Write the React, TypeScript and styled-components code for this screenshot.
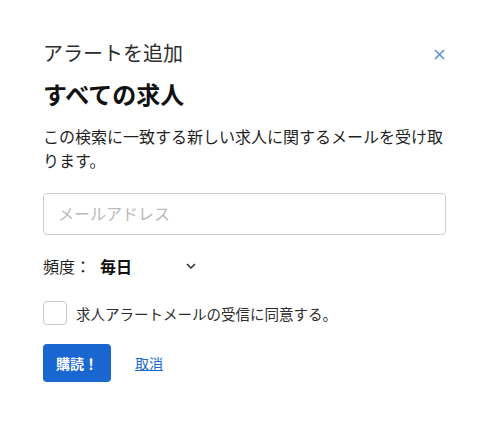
import styled, { createGlobalStyle } from "styled-components";

const GlobalStyle = createGlobalStyle`
    body {
        margin: 0;
        background: #ffffff;
        font-family: "Noto Sans", "Noto Sans CJK JP", sans-serif;
        color: #1f1f1f;
    }
`;

const Dialog = styled.div`
    width: 489px;
    box-sizing: border-box;
    padding: 40px 43px 40px 43px;
`;

const TopRow = styled.div`
    display: flex;
    align-items: center;
    justify-content: space-between;
    height: 28px;
`;

const Title = styled.h2`
    margin: 0;
    font-size: 20px;
    font-weight: 400;
    line-height: 28px;
    color: #2d2d2d;
`;

const CloseButton = styled.button`
    border: none;
    background: none;
    padding: 0;
    width: 14px;
    height: 14px;
    display: flex;
    align-items: center;
    justify-content: center;
    cursor: pointer;
`;

const Heading = styled.h1`
    margin: 11px 0 0 0;
    font-size: 24px;
    font-weight: 700;
    line-height: 32px;
    color: #111111;
`;

const Description = styled.p`
    margin: 14px 0 0 0;
    font-size: 16px;
    line-height: 24px;
    color: #1f1f1f;
`;

const EmailInput = styled.input`
    display: block;
    margin-top: 20px;
    width: 100%;
    height: 42px;
    box-sizing: border-box;
    border: 1px solid #cccccc;
    border-radius: 4px;
    padding: 0 14px;
    font-family: inherit;
    font-size: 16px;
    &::placeholder {
        color: #b9b9b9;
    }
`;

const FrequencyRow = styled.div`
    display: flex;
    align-items: center;
    margin-top: 19px;
    height: 24px;
    font-size: 16px;
`;

const Label = styled.span`
    color: #1f1f1f;
    width: 57px;
`;

const Select = styled.div`
    display: flex;
    align-items: center;
    justify-content: space-between;
    width: 96px;
    font-weight: 700;
    color: #111111;
`;

const CheckRow = styled.label`
    display: flex;
    align-items: center;
    gap: 9px;
    margin-top: 23px;
    font-size: 14.5px;
    color: #2d2d2d;
`;

const CheckBox = styled.span`
    width: 24px;
    height: 24px;
    box-sizing: border-box;
    border: 1px solid #c9c9c9;
    border-radius: 4px;
`;

const Actions = styled.div`
    display: flex;
    align-items: center;
    gap: 24px;
    margin-top: 19px;
`;

const SubmitButton = styled.button`
    height: 38px;
    padding: 0 13px;
    border: none;
    border-radius: 4px;
    background: #1a67d2;
    color: #ffffff;
    font-family: inherit;
    font-size: 14px;
    font-weight: 700;
`;

const CancelLink = styled.a`
    font-size: 14px;
    color: #1a67d2;
    text-decoration: underline;
`;

const App = () => {
    return (
        <Dialog>
            <GlobalStyle />
            <TopRow>
                <Title>アラートを追加</Title>
                <CloseButton aria-label="閉じる">
                    <svg width="11" height="11" viewBox="0 0 11 11">
                        <path d="M1 1L10 10M10 1L1 10" stroke="#5b8fe0" strokeWidth="1.6" />
                    </svg>
                </CloseButton>
            </TopRow>
            <Heading>すべての求人</Heading>
            <Description>この検索に一致する新しい求人に関するメールを受け取ります。</Description>
            <EmailInput placeholder="メールアドレス" />
            <FrequencyRow>
                <Label>頻度：</Label>
                <Select>
                    <span>毎日</span>
                    <svg width="10" height="6" viewBox="0 0 10 6">
                        <path d="M1 1L5 5L9 1" stroke="#222" strokeWidth="1.4" fill="none" />
                    </svg>
                </Select>
            </FrequencyRow>
            <CheckRow>
                <CheckBox />
                <span>求人アラートメールの受信に同意する。</span>
            </CheckRow>
            <Actions>
                <SubmitButton>購読！</SubmitButton>
                <CancelLink href="#">取消</CancelLink>
            </Actions>
        </Dialog>
    );
};

export default App;
